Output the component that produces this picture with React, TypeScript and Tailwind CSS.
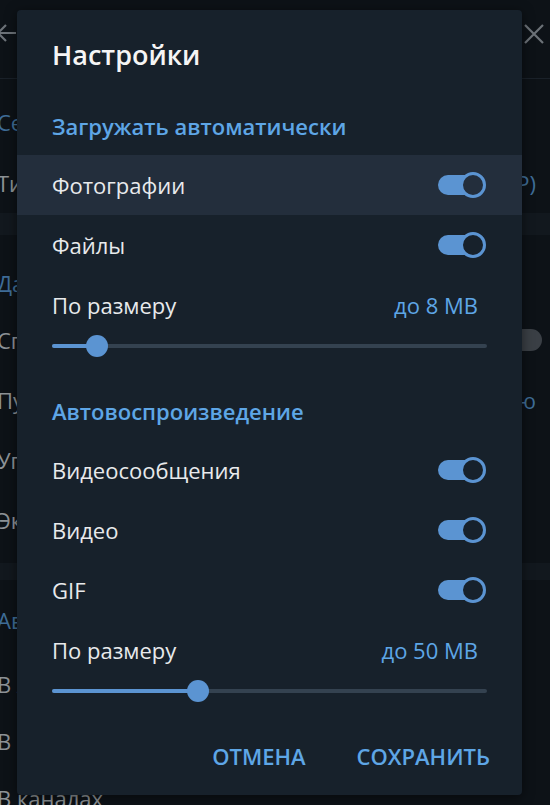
import React from "react";

const BLUE = "#5ea6e6";

function Toggle({ knobBg }: { knobBg: string }) {
  return (
    <div className="relative w-[48px] h-[28px] shrink-0">
      <div className="absolute left-0 top-[4px] w-[40px] h-[20px] rounded-full bg-[#5b94d2]" />
      <div
        className="absolute right-0 top-[1px] w-[26px] h-[26px] rounded-full border-[3px] border-[#5b94d2]"
        style={{ backgroundColor: knobBg }}
      />
    </div>
  );
}

function Slider({ pos }: { pos: number }) {
  return (
    <div className="relative h-[22px] mr-[35px]">
      <div className="absolute left-0 right-0 top-[9px] h-[4px] rounded-full bg-[#344250]" />
      <div className="absolute left-0 top-[9px] h-[4px] rounded-l-full bg-[#5b94d2]" style={{ width: pos + 11 }} />
      <div className="absolute top-0 w-[22px] h-[22px] rounded-full bg-[#5b94d2]" style={{ left: pos }} />
    </div>
  );
}

function Row({ label, highlight }: { label: string; highlight?: boolean }) {
  return (
    <div
      className={
        "h-[60px] flex items-center justify-between pl-[35px] pr-[36px] " +
        (highlight ? "bg-[#232e3c]" : "")
      }
    >
      <span className="text-[22px] leading-[30px] text-[#e8eaec]">{label}</span>
      <Toggle knobBg={highlight ? "#232e3c" : "#17212b"} />
    </div>
  );
}

function SizeRow({ value }: { value: string }) {
  return (
    <div className="h-[60px] flex items-center justify-between pl-[35px] pr-[44px]">
      <span className="text-[22px] leading-[30px] text-[#e8eaec]">По размеру</span>
      <span className="text-[22px] leading-[30px]" style={{ color: BLUE }}>{value}</span>
    </div>
  );
}

function BgRow({ label, right, toggle }: { label: string; right?: string; toggle?: boolean }) {
  return (
    <div className="h-[60px] flex items-center justify-between">
      <span className="ml-[-3px] text-[22px] leading-[30px] text-[#8d9296] whitespace-nowrap">{label}</span>
      {right && <span className="text-[22px] leading-[30px] mr-[14px] text-[#3f6d97]">{right}</span>}
      {toggle && (
        <div className="relative w-[40px] h-[22px] mr-[8px]">
          <div className="absolute inset-0 rounded-full bg-[#3a3f45]" />
        </div>
      )}
    </div>
  );
}

function BgSection({ label, h, pt }: { label: string; h: string; pt: string }) {
  return (
    <div className={h + " " + pt}>
      <div className="ml-[-3px] h-[30px] leading-[30px] text-[22px] text-[#3f6d97] whitespace-nowrap">{label}</div>
    </div>
  );
}

export default function App() {
  return (
    <div
      className="relative w-[550px] h-[805px] overflow-hidden bg-[#0d1217]"
      style={{ fontFamily: '"Open Sans", "Noto Sans", sans-serif' }}
    >
      {/* background page */}
      <div className="flex flex-col">
        <div className="h-[79px] border-b border-[#1a2129] flex items-center justify-between">
          <svg className="ml-[-5px] mt-[-12px]" width="24" height="24" viewBox="0 0 24 24" fill="none" stroke="#6c7278" strokeWidth="2.2">
            <path d="M21 12H4M11 4l-8 8 8 8" />
          </svg>
          <svg className="mr-[5px] mt-[-10px]" width="22" height="22" viewBox="0 0 22 22" fill="none" stroke="#6c7278" strokeWidth="2.2">
            <path d="M2 2l18 18M20 2L2 20" />
          </svg>
        </div>
        <BgSection label="Сетевые настройки" h="h-[74px]" pt="pt-[28px]" />
        <BgRow label="Тип соединения" right="(TCP)" />
        <div className="h-[22px] bg-[#12181e]" />
        <BgSection label="Данные и память" h="h-[75px]" pt="pt-[33px]" />
        <BgRow label="Спрашивать путь для сохранения" toggle />
        <BgRow label="Путь для сохранения" right="По умолчанию" />
        <BgRow label="Управление памятью устройства" />
        <BgRow label="Экспорт данных из Telegram" />
        <div className="h-[13px]" />
        <div className="h-[17px] bg-[#12181e]" />
        <BgSection label="Автозагрузка медиа" h="h-[76px]" pt="pt-[25px]" />
        <div className="h-[57px] flex items-center"><span className="ml-[-3px] text-[22px] text-[#8d9296] whitespace-nowrap">В личных чатах</span></div>
        <div className="h-[57px] flex items-center"><span className="ml-[-3px] text-[22px] text-[#8d9296] whitespace-nowrap">В группах</span></div>
        <div className="h-[57px] flex items-center"><span className="ml-[-3px] text-[22px] text-[#8d9296] whitespace-nowrap">В каналах</span></div>
      </div>

      {/* modal */}
      <div className="absolute left-[17px] top-[10px] w-[505px] h-[785px] rounded-[4px] bg-[#17212b] shadow-[0_2px_12px_rgba(0,0,0,0.5)] flex flex-col overflow-hidden">
        <div className="mt-[30px] h-[30px] leading-[30px] pl-[35px] text-[27px] font-semibold text-[#f5f5f5]">Настройки</div>
        <div className="mt-[41px] h-[30px] leading-[30px] pl-[35px] text-[22px] font-semibold" style={{ color: BLUE }}>
          Загружать автоматически
        </div>
        <div className="h-[14px]" />
        <Row label="Фотографии" highlight />
        <Row label="Файлы" />
        <SizeRow value="до 8 MB" />
        <div className="pl-[35px]">
          <Slider pos={34} />
        </div>
        <div className="mt-[39px] h-[30px] leading-[30px] pl-[35px] text-[22px] font-semibold" style={{ color: BLUE }}>
          Автовоспроизведение
        </div>
        <div className="h-[14px]" />
        <Row label="Видеосообщения" />
        <Row label="Видео" />
        <Row label="GIF" />
        <SizeRow value="до 50 MB" />
        <div className="pl-[35px]">
          <Slider pos={135} />
        </div>
        <div className="mt-[36px] h-[36px] flex items-center justify-end gap-[51px] pr-[32px]">
          <span className="text-[22px] leading-[30px] font-semibold" style={{ color: BLUE }}>ОТМЕНА</span>
          <span className="text-[22px] leading-[30px] font-semibold" style={{ color: BLUE }}>СОХРАНИТЬ</span>
        </div>
      </div>
    </div>
  );
}
